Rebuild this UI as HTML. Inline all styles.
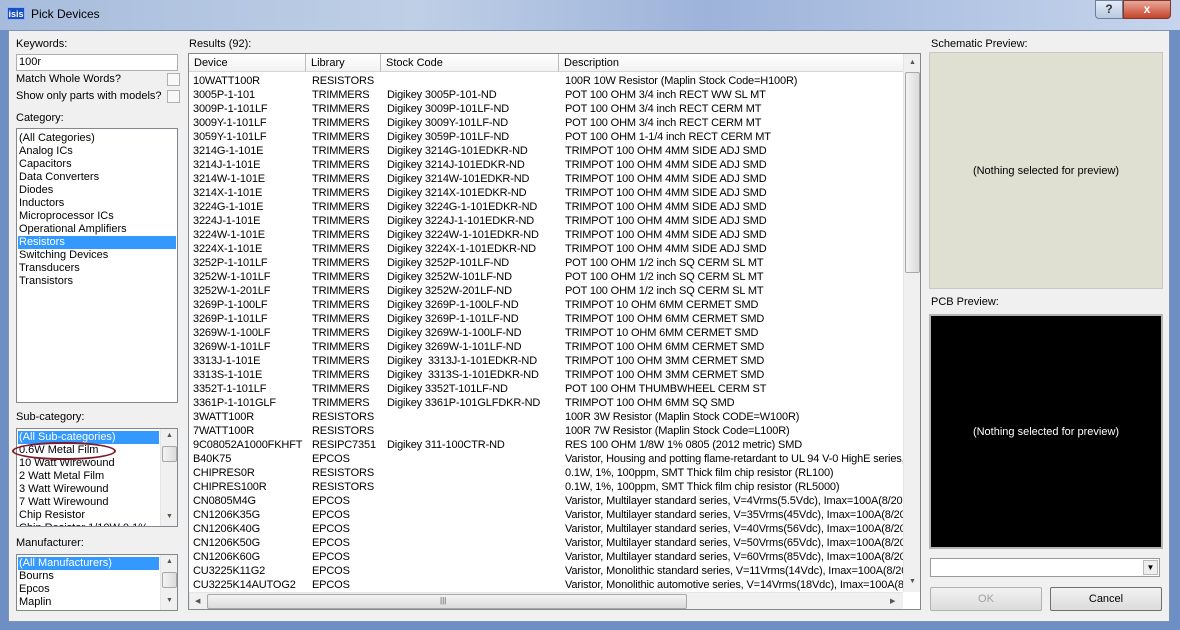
<!DOCTYPE html>
<html><head><meta charset="utf-8">
<style>
*{margin:0;padding:0;box-sizing:border-box}
body{width:1180px;height:630px;overflow:hidden;background:#6d8fc4;font-family:"Liberation Sans",sans-serif;font-size:11px;color:#000;position:relative}
.a{position:absolute}
#title{left:0;top:0;width:1180px;height:30px;background:linear-gradient(90deg,#a7bcdc 0%,#bfcfe6 35%,#9db3da 60%,#c6d5ec 100%)}
#body{left:8px;top:30px;width:1162px;height:592px;background:#f0f0f0;border:1px solid #7f93b5}
.lbl{position:absolute;font-size:11px;white-space:nowrap}
.box{position:absolute;background:#fff;border:1px solid #828790;overflow:hidden}
.li{position:absolute;left:2px;height:13px;line-height:13px;white-space:nowrap}
.sel{background:#3399ff;color:#fff;left:1px;right:1px;padding-left:1px}
.vs{position:absolute;background:#f0f0f0;border-left:1px solid #e5e5e5}
.thumb{position:absolute;background:linear-gradient(90deg,#f3f3f3,#dcdcdc);border:1px solid #a8a8a8;border-radius:2px}
.cb{position:absolute;width:13px;height:13px;border:1px solid #b0b0b0;background:#f8f8f8}
.row{position:absolute;left:4px;height:14px;line-height:14px;white-space:nowrap;width:710px;overflow:hidden;letter-spacing:-0.15px}
.row span{position:absolute;top:0}
.c1{left:0}.c2{left:119px}.c3{left:194px}.c4{left:372px}
.hdr{position:absolute;top:0;height:18px;line-height:18px;border-right:1px solid #bcbcbc;border-bottom:1px solid #d5d5d5;background:linear-gradient(#fff,#f2f2f2);padding-left:5px}
.btn{position:absolute;border:1px solid #707070;background:linear-gradient(#f2f2f2,#dcdcdc);text-align:center;line-height:22px;border-radius:2px}
.arr{position:absolute;font-size:7px;color:#555}
</style></head><body>
<div id="title" class="a"></div>
<div class="a" style="left:7px;top:7px;width:18px;height:13px;background:#1a4fc0;color:#fff;font-size:9px;font-weight:bold;line-height:13px;text-align:center;border:1px solid #8fb0ff">isis</div>
<div class="lbl" style="left:31px;top:7px;font-size:12px">Pick Devices</div>
<div class="a" style="left:1095px;top:0;width:28px;height:19px;background:linear-gradient(#e3ebf6,#b8c9e1);border:1px solid #6d7f9f;border-radius:0 0 0 4px;text-align:center;line-height:17px;color:#333;font-size:12px;font-weight:bold">?</div>
<div class="a" style="left:1123px;top:0;width:48px;height:19px;background:linear-gradient(#e9a99a,#c6432a);border:1px solid #7a3a2e;border-radius:0 0 4px 0;text-align:center;line-height:17px;color:#fff;font-size:12px;font-weight:bold">x</div>
<div id="body" class="a"></div>

<div class="lbl" style="left:16px;top:38px">Keywords:</div>
<div class="box" style="left:16px;top:54px;width:162px;height:17px;border-color:#abadb3"><div class="li" style="top:1px">100r</div></div>
<div class="lbl" style="left:16px;top:73px">Match Whole Words?</div>
<div class="cb" style="left:167px;top:73px"></div>
<div class="lbl" style="left:16px;top:90px">Show only parts with models?</div>
<div class="cb" style="left:167px;top:90px"></div>
<div class="lbl" style="left:16px;top:112px">Category:</div>
<div class="box" style="left:16px;top:128px;width:162px;height:275px">
<div class="li" style="top:3px">(All Categories)</div>
<div class="li" style="top:16px">Analog ICs</div>
<div class="li" style="top:29px">Capacitors</div>
<div class="li" style="top:42px">Data Converters</div>
<div class="li" style="top:55px">Diodes</div>
<div class="li" style="top:68px">Inductors</div>
<div class="li" style="top:81px">Microprocessor ICs</div>
<div class="li" style="top:94px">Operational Amplifiers</div>
<div class="li sel" style="top:107px">Resistors</div>
<div class="li" style="top:120px">Switching Devices</div>
<div class="li" style="top:133px">Transducers</div>
<div class="li" style="top:146px">Transistors</div>
</div>

<div class="lbl" style="left:16px;top:411px">Sub-category:</div>
<div class="box" style="left:16px;top:428px;width:162px;height:99px">
<div class="li sel" style="top:2px;right:18px">(All Sub-categories)</div>
<div class="li" style="top:15px">0.6W Metal Film</div>
<div class="li" style="top:28px">10 Watt Wirewound</div>
<div class="li" style="top:41px">2 Watt Metal Film</div>
<div class="li" style="top:54px">3 Watt Wirewound</div>
<div class="li" style="top:67px">7 Watt Wirewound</div>
<div class="li" style="top:80px">Chip Resistor</div>
<div class="li" style="top:93px">Chip Resistor 1/10W 0.1%</div>
<div class="vs" style="left:143px;top:0;width:17px;height:97px"><div class="arr" style="left:5px;top:3px">▲</div><div class="thumb" style="left:1px;top:17px;width:15px;height:16px"></div><div class="arr" style="left:5px;top:84px">▼</div></div>
</div>
<div class="a" style="left:12px;top:442px;width:104px;height:18px;border:2px solid #7a1a2a;border-radius:50%"></div>

<div class="lbl" style="left:16px;top:537px">Manufacturer:</div>
<div class="box" style="left:16px;top:554px;width:162px;height:57px">
<div class="li sel" style="top:2px;right:18px">(All Manufacturers)</div>
<div class="li" style="top:15px">Bourns</div>
<div class="li" style="top:28px">Epcos</div>
<div class="li" style="top:41px">Maplin</div>
<div class="vs" style="left:143px;top:0;width:17px;height:55px"><div class="arr" style="left:5px;top:3px">▲</div><div class="thumb" style="left:1px;top:17px;width:15px;height:16px"></div><div class="arr" style="left:5px;top:42px">▼</div></div>
</div>

<div class="lbl" style="left:189px;top:38px">Results (92):</div>
<div class="box" style="left:188px;top:53px;width:733px;height:557px">
<div class="hdr" style="left:0;width:117px">Device</div>
<div class="hdr" style="left:117px;width:75px">Library</div>
<div class="hdr" style="left:192px;width:178px">Stock Code</div>
<div class="hdr" style="left:370px;width:345px">Description</div>
<div style="position:absolute;left:0;top:20px;width:714px;height:517px;overflow:hidden">
<div class="row" style="top:0"><span class="c1">10WATT100R</span><span class="c2">RESISTORS</span><span class="c3"></span><span class="c4">100R 10W Resistor (Maplin Stock Code=H100R)</span></div>
<div class="row" style="top:14px"><span class="c1">3005P-1-101</span><span class="c2">TRIMMERS</span><span class="c3">Digikey 3005P-101-ND</span><span class="c4">POT 100 OHM 3/4 inch RECT WW SL MT</span></div>
<div class="row" style="top:28px"><span class="c1">3009P-1-101LF</span><span class="c2">TRIMMERS</span><span class="c3">Digikey 3009P-101LF-ND</span><span class="c4">POT 100 OHM 3/4 inch RECT CERM MT</span></div>
<div class="row" style="top:42px"><span class="c1">3009Y-1-101LF</span><span class="c2">TRIMMERS</span><span class="c3">Digikey 3009Y-101LF-ND</span><span class="c4">POT 100 OHM 3/4 inch RECT CERM MT</span></div>
<div class="row" style="top:56px"><span class="c1">3059Y-1-101LF</span><span class="c2">TRIMMERS</span><span class="c3">Digikey 3059P-101LF-ND</span><span class="c4">POT 100 OHM 1-1/4 inch RECT CERM MT</span></div>
<div class="row" style="top:70px"><span class="c1">3214G-1-101E</span><span class="c2">TRIMMERS</span><span class="c3">Digikey 3214G-101EDKR-ND</span><span class="c4">TRIMPOT 100 OHM 4MM SIDE ADJ SMD</span></div>
<div class="row" style="top:84px"><span class="c1">3214J-1-101E</span><span class="c2">TRIMMERS</span><span class="c3">Digikey 3214J-101EDKR-ND</span><span class="c4">TRIMPOT 100 OHM 4MM SIDE ADJ SMD</span></div>
<div class="row" style="top:98px"><span class="c1">3214W-1-101E</span><span class="c2">TRIMMERS</span><span class="c3">Digikey 3214W-101EDKR-ND</span><span class="c4">TRIMPOT 100 OHM 4MM SIDE ADJ SMD</span></div>
<div class="row" style="top:112px"><span class="c1">3214X-1-101E</span><span class="c2">TRIMMERS</span><span class="c3">Digikey 3214X-101EDKR-ND</span><span class="c4">TRIMPOT 100 OHM 4MM SIDE ADJ SMD</span></div>
<div class="row" style="top:126px"><span class="c1">3224G-1-101E</span><span class="c2">TRIMMERS</span><span class="c3">Digikey 3224G-1-101EDKR-ND</span><span class="c4">TRIMPOT 100 OHM 4MM SIDE ADJ SMD</span></div>
<div class="row" style="top:140px"><span class="c1">3224J-1-101E</span><span class="c2">TRIMMERS</span><span class="c3">Digikey 3224J-1-101EDKR-ND</span><span class="c4">TRIMPOT 100 OHM 4MM SIDE ADJ SMD</span></div>
<div class="row" style="top:154px"><span class="c1">3224W-1-101E</span><span class="c2">TRIMMERS</span><span class="c3">Digikey 3224W-1-101EDKR-ND</span><span class="c4">TRIMPOT 100 OHM 4MM SIDE ADJ SMD</span></div>
<div class="row" style="top:168px"><span class="c1">3224X-1-101E</span><span class="c2">TRIMMERS</span><span class="c3">Digikey 3224X-1-101EDKR-ND</span><span class="c4">TRIMPOT 100 OHM 4MM SIDE ADJ SMD</span></div>
<div class="row" style="top:182px"><span class="c1">3252P-1-101LF</span><span class="c2">TRIMMERS</span><span class="c3">Digikey 3252P-101LF-ND</span><span class="c4">POT 100 OHM 1/2 inch SQ CERM SL MT</span></div>
<div class="row" style="top:196px"><span class="c1">3252W-1-101LF</span><span class="c2">TRIMMERS</span><span class="c3">Digikey 3252W-101LF-ND</span><span class="c4">POT 100 OHM 1/2 inch SQ CERM SL MT</span></div>
<div class="row" style="top:210px"><span class="c1">3252W-1-201LF</span><span class="c2">TRIMMERS</span><span class="c3">Digikey 3252W-201LF-ND</span><span class="c4">POT 100 OHM 1/2 inch SQ CERM SL MT</span></div>
<div class="row" style="top:224px"><span class="c1">3269P-1-100LF</span><span class="c2">TRIMMERS</span><span class="c3">Digikey 3269P-1-100LF-ND</span><span class="c4">TRIMPOT 10 OHM 6MM CERMET SMD</span></div>
<div class="row" style="top:238px"><span class="c1">3269P-1-101LF</span><span class="c2">TRIMMERS</span><span class="c3">Digikey 3269P-1-101LF-ND</span><span class="c4">TRIMPOT 100 OHM 6MM CERMET SMD</span></div>
<div class="row" style="top:252px"><span class="c1">3269W-1-100LF</span><span class="c2">TRIMMERS</span><span class="c3">Digikey 3269W-1-100LF-ND</span><span class="c4">TRIMPOT 10 OHM 6MM CERMET SMD</span></div>
<div class="row" style="top:266px"><span class="c1">3269W-1-101LF</span><span class="c2">TRIMMERS</span><span class="c3">Digikey 3269W-1-101LF-ND</span><span class="c4">TRIMPOT 100 OHM 6MM CERMET SMD</span></div>
<div class="row" style="top:280px"><span class="c1">3313J-1-101E</span><span class="c2">TRIMMERS</span><span class="c3">Digikey &nbsp;3313J-1-101EDKR-ND</span><span class="c4">TRIMPOT 100 OHM 3MM CERMET SMD</span></div>
<div class="row" style="top:294px"><span class="c1">3313S-1-101E</span><span class="c2">TRIMMERS</span><span class="c3">Digikey &nbsp;3313S-1-101EDKR-ND</span><span class="c4">TRIMPOT 100 OHM 3MM CERMET SMD</span></div>
<div class="row" style="top:308px"><span class="c1">3352T-1-101LF</span><span class="c2">TRIMMERS</span><span class="c3">Digikey 3352T-101LF-ND</span><span class="c4">POT 100 OHM THUMBWHEEL CERM ST</span></div>
<div class="row" style="top:322px"><span class="c1">3361P-1-101GLF</span><span class="c2">TRIMMERS</span><span class="c3">Digikey 3361P-101GLFDKR-ND</span><span class="c4">TRIMPOT 100 OHM 6MM SQ SMD</span></div>
<div class="row" style="top:336px"><span class="c1">3WATT100R</span><span class="c2">RESISTORS</span><span class="c4">100R 3W Resistor (Maplin Stock CODE=W100R)</span></div>
<div class="row" style="top:350px"><span class="c1">7WATT100R</span><span class="c2">RESISTORS</span><span class="c4">100R 7W Resistor (Maplin Stock Code=L100R)</span></div>
<div class="row" style="top:364px"><span class="c1">9C08052A1000FKHFT</span><span class="c2">RESIPC7351</span><span class="c3">Digikey 311-100CTR-ND</span><span class="c4">RES 100 OHM 1/8W 1% 0805 (2012 metric) SMD</span></div>
<div class="row" style="top:378px"><span class="c1">B40K75</span><span class="c2">EPCOS</span><span class="c4">Varistor, Housing and potting flame-retardant to UL 94 V-0 HighE series,</span></div>
<div class="row" style="top:392px"><span class="c1">CHIPRES0R</span><span class="c2">RESISTORS</span><span class="c4">0.1W, 1%, 100ppm, SMT Thick film chip resistor (RL100)</span></div>
<div class="row" style="top:406px"><span class="c1">CHIPRES100R</span><span class="c2">RESISTORS</span><span class="c4">0.1W, 1%, 100ppm, SMT Thick film chip resistor (RL5000)</span></div>
<div class="row" style="top:420px"><span class="c1">CN0805M4G</span><span class="c2">EPCOS</span><span class="c4">Varistor, Multilayer standard series, V=4Vrms(5.5Vdc), Imax=100A(8/20us)</span></div>
<div class="row" style="top:434px"><span class="c1">CN1206K35G</span><span class="c2">EPCOS</span><span class="c4">Varistor, Multilayer standard series, V=35Vrms(45Vdc), Imax=100A(8/20us)</span></div>
<div class="row" style="top:448px"><span class="c1">CN1206K40G</span><span class="c2">EPCOS</span><span class="c4">Varistor, Multilayer standard series, V=40Vrms(56Vdc), Imax=100A(8/20us)</span></div>
<div class="row" style="top:462px"><span class="c1">CN1206K50G</span><span class="c2">EPCOS</span><span class="c4">Varistor, Multilayer standard series, V=50Vrms(65Vdc), Imax=100A(8/20us)</span></div>
<div class="row" style="top:476px"><span class="c1">CN1206K60G</span><span class="c2">EPCOS</span><span class="c4">Varistor, Multilayer standard series, V=60Vrms(85Vdc), Imax=100A(8/20us)</span></div>
<div class="row" style="top:490px"><span class="c1">CU3225K11G2</span><span class="c2">EPCOS</span><span class="c4">Varistor, Monolithic standard series, V=11Vrms(14Vdc), Imax=100A(8/20us)</span></div>
<div class="row" style="top:504px"><span class="c1">CU3225K14AUTOG2</span><span class="c2">EPCOS</span><span class="c4">Varistor, Monolithic automotive series, V=14Vrms(18Vdc), Imax=100A(8/20us)</span></div>
</div>
<div class="vs" style="left:714px;top:0;width:17px;height:538px"><div class="arr" style="left:5px;top:5px">▲</div><div class="thumb" style="left:1px;top:18px;width:15px;height:201px"></div><div class="arr" style="left:5px;top:524px">▼</div></div>
<div class="vs" style="left:0;top:538px;width:714px;height:17px;border-top:1px solid #e5e5e5"><div class="arr" style="left:5px;top:4px">◀</div><div class="thumb" style="left:17px;top:1px;width:480px;height:15px;background:linear-gradient(#f3f3f3,#dcdcdc)"></div><div class="arr" style="left:250px;top:3px;font-size:8px">|||</div><div class="arr" style="left:700px;top:4px">▶</div></div>
</div>

<div class="lbl" style="left:931px;top:38px">Schematic Preview:</div>
<div class="a" style="left:929px;top:52px;width:234px;height:237px;background:#dfdfd2;border:1px solid #c8c8c0"></div>
<div class="lbl" style="left:929px;top:165px;width:234px;text-align:center">(Nothing selected for preview)</div>
<div class="lbl" style="left:931px;top:296px">PCB Preview:</div>
<div class="a" style="left:929px;top:314px;width:234px;height:235px;background:#000;border:2px solid #b5b5b5"></div>
<div class="lbl" style="left:929px;top:426px;width:234px;text-align:center;color:#fff">(Nothing selected for preview)</div>
<div class="a" style="left:930px;top:558px;width:230px;height:19px;background:#fff;border:1px solid #999"><div class="a" style="right:1px;top:1px;width:15px;height:15px;background:#eee;border:1px solid #bbb;font-size:8px;text-align:center;line-height:14px">▼</div></div>
<div class="btn" style="left:930px;top:587px;width:112px;height:24px;color:#a0a0a0;border-color:#adb2b5">OK</div>
<div class="btn" style="left:1050px;top:587px;width:112px;height:24px">Cancel</div>
</body></html>
